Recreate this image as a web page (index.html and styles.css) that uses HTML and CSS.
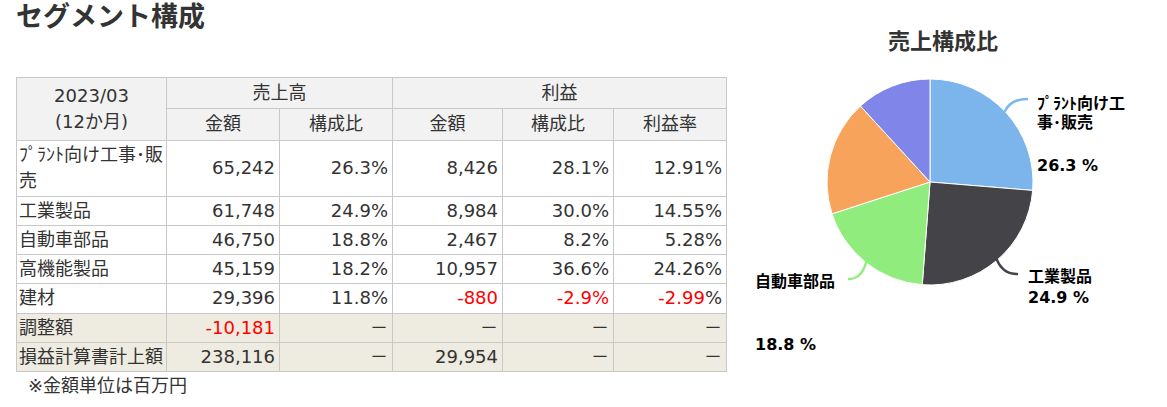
FILE: index.html
```html
<!DOCTYPE html>
<html lang="ja">
<head>
<meta charset="utf-8">
<title>セグメント構成</title>
<link rel="stylesheet" href="styles.css">
</head>
<body>
<div class="page">
  <section class="left">
    <h1 class="title">セグメント構成</h1>
    <table class="seg">
      <colgroup>
        <col class="c-name"><col class="c-amt"><col class="c-ratio"><col class="c-pamt"><col class="c-pratio"><col class="c-rate">
      </colgroup>
      <thead>
        <tr>
          <th rowspan="2">2023/03<br>(12か月)</th>
          <th colspan="2">売上高</th>
          <th colspan="3">利益</th>
        </tr>
        <tr class="sub">
          <th>金額</th><th>構成比</th><th>金額</th><th>構成比</th><th>利益率</th>
        </tr>
      </thead>
      <tbody>
        <tr class="tall"><td class="name">ﾌﾟﾗﾝﾄ向け工事･販売</td><td class="num">65,242</td><td class="num">26.3%</td><td class="num">8,426</td><td class="num">28.1%</td><td class="num">12.91%</td></tr>
        <tr><td class="name">工業製品</td><td class="num">61,748</td><td class="num">24.9%</td><td class="num">8,984</td><td class="num">30.0%</td><td class="num">14.55%</td></tr>
        <tr><td class="name">自動車部品</td><td class="num">46,750</td><td class="num">18.8%</td><td class="num">2,467</td><td class="num">8.2%</td><td class="num">5.28%</td></tr>
        <tr><td class="name">高機能製品</td><td class="num">45,159</td><td class="num">18.2%</td><td class="num">10,957</td><td class="num">36.6%</td><td class="num">24.26%</td></tr>
        <tr class="tall"><td class="name">建材</td><td class="num">29,396</td><td class="num">11.8%</td><td class="num neg">-880</td><td class="num neg">-2.9%</td><td class="num"><span class="neg">-2.99</span>%</td></tr>
        <tr class="sum"><td class="name">調整額</td><td class="num neg">-10,181</td><td class="num">－</td><td class="num">－</td><td class="num">－</td><td class="num">－</td></tr>
        <tr class="sum"><td class="name">損益計算書計上額</td><td class="num">238,116</td><td class="num">－</td><td class="num">29,954</td><td class="num">－</td><td class="num">－</td></tr>
      </tbody>
    </table>
    <p class="note">※金額単位は百万円</p>
  </section>
  <svg class="chart" width="441" height="407" viewBox="726 0 441 407" xmlns="http://www.w3.org/2000/svg">
    <text class="chart-title" x="943" y="49" text-anchor="middle">売上構成比</text>
    <g class="slices">
      <path fill="#7cb5ec" d="M930 182 L930 79 A103 103 0 0 1 1032.66 190.40 Z"/>
      <path fill="#434348" d="M930 182 L1032.66 190.40 A103 103 0 0 1 922.24 284.71 Z"/>
      <path fill="#90ed7d" d="M930 182 L922.24 284.71 A103 103 0 0 1 832.04 213.83 Z"/>
      <path fill="#f7a35c" d="M930 182 L832.04 213.83 A103 103 0 0 1 860.44 106.03 Z"/>
      <path fill="#8085e9" d="M930 182 L860.44 106.03 A103 103 0 0 1 930 79 Z"/>
    </g>
    <g class="connectors">
      <path stroke="#7cb5ec" d="M1005 111 Q1011 99 1027 99"/>
      <path stroke="#434348" d="M997 260 Q1003 274 1017 274"/>
      <path stroke="#90ed7d" d="M866 263 Q861 279 849 279"/>
    </g>
    <g class="labels">
      <text x="1037" y="109">ﾌﾟﾗﾝﾄ向け工</text>
      <text x="1037" y="128">事･販売</text>
      <text x="1037" y="171">26.3 %</text>
      <text x="1028" y="282">工業製品</text>
      <text x="1028" y="303">24.9 %</text>
      <text x="755" y="287">自動車部品</text>
      <text x="755" y="350">18.8 %</text>
    </g>
  </svg>
</div>
</body>
</html>
```

FILE: styles.css
```css
html, body {
  margin: 0;
  padding: 0;
  background: #fff;
}

body {
  font-family: "DejaVu Sans", "Noto Sans CJK JP", sans-serif;
  color: #333;
}

.page {
  display: flex;
  align-items: flex-start;
  width: 1167px;
  height: 407px;
  overflow: hidden;
}

.left {
  flex: none;
  width: 710px;
  padding-left: 16px;
}

.title {
  margin: 0;
  font-size: 27px;
  line-height: 34px;
  font-weight: bold;
  color: #333;
}

.seg {
  margin-top: 43px;
  border-collapse: collapse;
  table-layout: fixed;
  width: 711px;
  font-size: 18px;
  color: #333;
}

.c-name { width: 150px; }
.c-amt { width: 113px; }
.c-ratio { width: 113px; }
.c-pamt { width: 110px; }
.c-pratio { width: 111px; }
.c-rate { width: 113px; }

.seg th,
.seg td {
  border: 1px solid #c8c8c8;
  line-height: 26px;
  font-weight: normal;
  vertical-align: middle;
}

.seg th {
  background: #f2f2f2;
  text-align: center;
  padding: 2px 3px;
}

.seg tr.sub th {
  padding-bottom: 3px;
}

.seg td {
  padding: 1px 4px 1px 2px;
  background: #fff;
}

.seg tr.tall td {
  padding-bottom: 2px;
}

.seg td.name {
  text-align: left;
  padding-right: 0;
}

.seg td.num {
  text-align: right;
  white-space: nowrap;
}

.seg tr.sum td {
  background: #eeebe0;
}

.neg {
  color: #ff0000;
}

.note {
  margin: 1px 0 0 12px;
  font-size: 18px;
  line-height: 26px;
  color: #333;
}

.chart {
  flex: none;
  display: block;
}

.chart-title {
  font-family: "DejaVu Sans", "Noto Sans CJK JP", sans-serif;
  font-size: 22px;
  font-weight: bold;
  fill: #333;
}

.slices path {
  stroke: #fff;
  stroke-width: 1;
  stroke-linejoin: round;
}

.connectors path {
  fill: none;
  stroke-width: 2.5;
  stroke-linecap: round;
}

.labels text {
  font-family: "DejaVu Sans", "Noto Sans CJK JP", sans-serif;
  font-size: 16px;
  font-weight: bold;
  fill: #000;
}
```
